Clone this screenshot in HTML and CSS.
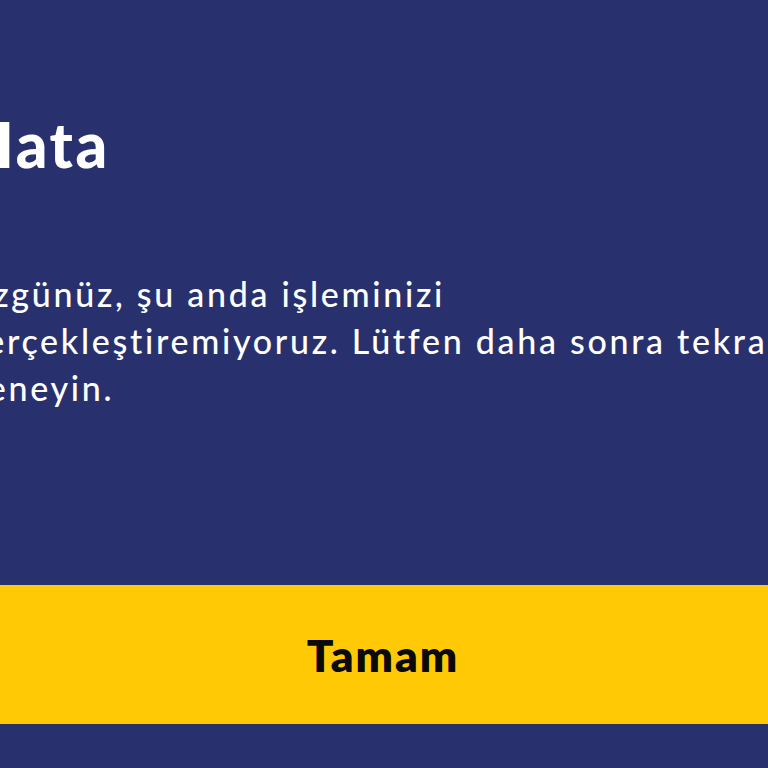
FILE: index.html
```html
<!DOCTYPE html>
<html lang="tr">
<head>
<meta charset="utf-8">
<title>Hata</title>
<link rel="stylesheet" href="styles.css">
</head>
<body>
<main class="dialog">
  <h1 class="title">Hata</h1>
  <p class="message">Üzgünüz, şu anda işleminizi gerçekleştiremiyoruz. Lütfen daha sonra tekrar deneyin.</p>
  <button class="ok" type="button">Tamam</button>
</main>
</body>
</html>
```
FILE: styles.css
```css
html, body {
  margin: 0;
  padding: 0;
  background: #28316d;
  overflow: hidden;
}
body {
  font-family: Lato, "Noto Sans", sans-serif;
  color: #ffffff;
}
.dialog {
  margin-left: -34px;
  width: 840px;
  padding-top: 108px;
  display: flex;
  flex-direction: column;
}
.title {
  margin: 0;
  font-size: 62px;
  line-height: 72px;
  font-weight: 900;
  letter-spacing: 2.5px;
}
.message {
  margin: 90px 0 0;
  width: 825px;
  font-size: 34px;
  line-height: 47px;
  font-weight: 500;
  letter-spacing: 2.7px;
}
.ok {
  margin-top: 174px;
  height: 139px;
  width: 100%;
  border: 0;
  background: #ffca05;
  color: #0a0a0a;
  font-family: Lato, "Noto Sans", sans-serif;
  font-size: 44px;
  font-weight: 800;
  letter-spacing: 2px;
  padding: 0 40px 0 34px;
  box-sizing: border-box;
}
```
